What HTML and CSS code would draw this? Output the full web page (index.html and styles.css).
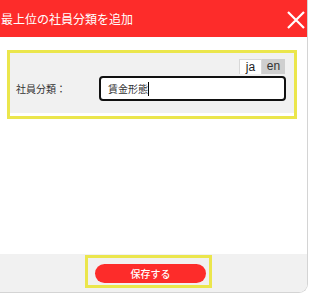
FILE: index.html
```html
<!DOCTYPE html>
<html lang="ja">
<head>
<meta charset="utf-8">
<link rel="stylesheet" href="styles.css">
</head>
<body>
<div class="dialog">
  <div class="header">
    <span class="title">最上位の社員分類を追加</span>
    <svg class="close" width="18" height="18" viewBox="0 0 18 18"><path d="M1 1L17 17M17 1L1 17" stroke="#fff" stroke-width="2.2" fill="none"/></svg>
  </div>
  <div class="body">
    <div class="panel-wrap">
      <div class="panel">
        <div class="tabs">
          <span class="tab active">ja</span>
          <span class="tab">en</span>
        </div>
        <div class="row">
          <label class="label">社員分類：</label>
          <div class="input"><span>賃金形態</span><i class="caret"></i></div>
        </div>
      </div>
    </div>
  </div>
  <div class="footer">
    <div class="btn-wrap"><button class="btn">保存する</button></div>
  </div>
</div>
</body>
</html>
```
FILE: styles.css
```css
* { box-sizing: border-box; }
html, body { margin: 0; padding: 0; background: #fff; }
body { font-family: "Noto Sans CJK JP", "Noto Sans", sans-serif; }
.dialog {
  width: 308px;
  height: 293px;
  display: flex;
  flex-direction: column;
  border-right: 1px solid #d4d4d4;
  border-bottom: 1px solid #d4d4d4;
  border-bottom-right-radius: 9px;
  overflow: hidden;
}
.header {
  height: 37px;
  flex: none;
  background: #fd2c2a;
  display: flex;
  align-items: center;
  justify-content: space-between;
  padding: 0 2px 0 1px;
}
.title { color: #fff; font-size: 12px; line-height: 14px; }
.close { display: block; margin-top: 2px; }
.body { flex: 1; padding: 16px 13px 0 10px; }
.panel-wrap { outline: 3px solid #ebe64c; padding-bottom: 3px; }
.panel { background: #f1f1f1; height: 60px; padding: 6px 8px 0 6px; }
.tabs { display: flex; justify-content: flex-end; padding-right: 1px; }
.tab {
  width: 23px; height: 15px;
  font-family: "Liberation Sans", sans-serif;
  font-size: 12px; line-height: 15px;
  text-align: center;
  background: #cfcfcf;
  color: #333;
}
.tab.active { background: #fff; border: 1px solid #d8d8d8; border-bottom: none; color: #222; line-height: 14px; }
.row { display: flex; align-items: center; margin-top: 2px; }
.label { width: 83px; font-size: 10px; color: #333; }
.input {
  flex: 1;
  height: 25px;
  border: 2px solid #111;
  border-radius: 4px;
  background: #fff;
  display: flex;
  align-items: center;
  padding-left: 7px;
  font-size: 10px;
  color: #333;
}
.caret { display: inline-block; width: 1px; height: 14px; background: #000; }
.footer {
  height: 38px;
  flex: none;
  background: #f1f1f1;
  padding: 4px 0 0 88px;
}
.btn-wrap { outline: 3px solid #ebe64c; width: 121px; height: 27px; padding: 6px 3px 2px 7px; }
.btn {
  display: block;
  width: 111px; height: 19px;
  border: none; border-radius: 10px;
  background: #fd2c2a;
  color: #fff;
  font-family: "Noto Sans CJK JP", sans-serif;
  font-size: 10px; font-weight: 500;
  padding: 0; line-height: 19px;
}
```
